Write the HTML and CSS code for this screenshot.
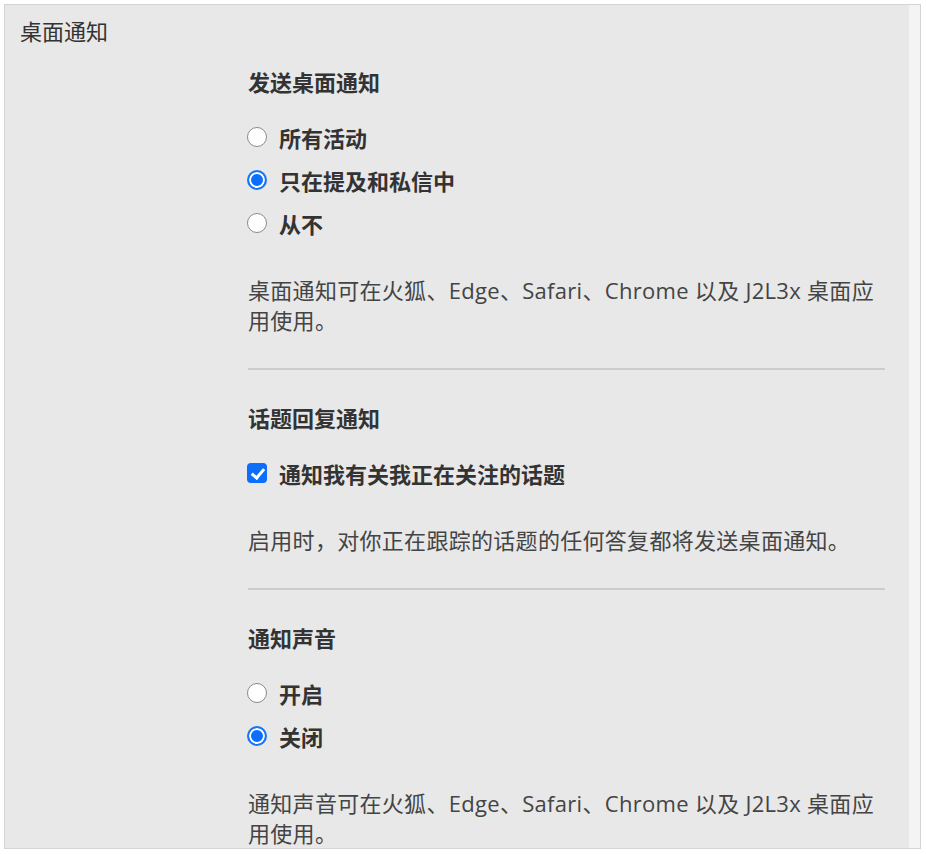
FILE: index.html
```html
<!DOCTYPE html>
<html lang="zh-CN">
<head>
    <meta charset="UTF-8">
    <meta name="viewport" content="width=device-width, initial-scale=1.0">
    <title>桌面通知</title>
    <link rel="stylesheet" href="styles.css">
</head>
<body>
    <div class="panel">
        <div class="panel-main">
            <h2 class="panel-title">桌面通知</h2>
            <div class="panel-body">
                <div class="section">
                    <h3 class="section-title">发送桌面通知</h3>
                    <div class="options">
                        <label class="option"><input type="radio" name="desktop"> 所有活动</label>
                        <label class="option"><input type="radio" name="desktop" checked> 只在提及和私信中</label>
                        <label class="option"><input type="radio" name="desktop"> 从不</label>
                    </div>
                    <p class="hint">桌面通知可在火狐、Edge、Safari、Chrome 以及 J2L3x 桌面应用使用。</p>
                </div>
                <div class="section">
                    <h3 class="section-title">话题回复通知</h3>
                    <div class="options">
                        <label class="option"><input type="checkbox" checked> 通知我有关我正在关注的话题</label>
                    </div>
                    <p class="hint">启用时，对你正在跟踪的话题的任何答复都将发送桌面通知。</p>
                </div>
                <div class="section">
                    <h3 class="section-title">通知声音</h3>
                    <div class="options">
                        <label class="option"><input type="radio" name="sound"> 开启</label>
                        <label class="option"><input type="radio" name="sound" checked> 关闭</label>
                    </div>
                    <p class="hint">通知声音可在火狐、Edge、Safari、Chrome 以及 J2L3x 桌面应用使用。</p>
                </div>
            </div>
        </div>
        <div class="scroll-track"></div>
    </div>
</body>
</html>
```

FILE: styles.css
```css
body {
    margin: 0;
    padding: 4px;
    background: #fff;
    font-family: "Open Sans", "Noto Sans CJK SC", sans-serif;
    color: #333;
}
.panel {
    display: flex;
    width: 915px;
    height: 843px;
    border: 1px solid #d4d4d4;
    background: #e8e8e8;
    overflow: hidden;
}
.panel-main {
    flex: 1;
    padding: 11px 24px 0 15px;
}
.scroll-track {
    width: 11px;
    background: #f4f4f4;
}
.panel-title {
    margin: 0;
    font-size: 22px;
    font-weight: 400;
    line-height: 30px;
}
.panel-body {
    margin-left: 228px;
    padding-top: 21px;
}
.section {
    border-bottom: 2px solid #cccccc;
    padding-bottom: 33px;
    margin-bottom: 33px;
}
.section:last-child {
    border-bottom: none;
}
.section-title {
    margin: 0;
    font-size: 22px;
    font-weight: 700;
    line-height: 30px;
}
.options {
    margin-top: 18px;
}
.option {
    display: flex;
    align-items: center;
    gap: 12px;
    height: 43px;
    font-size: 22px;
    font-weight: 700;
}
.option input {
    appearance: none;
    width: 20px;
    height: 20px;
    margin: 0 0 0 -1px;
    background: #fff;
    border: 1px solid #8a8a8a;
    border-radius: 50%;
}
.option input[type="radio"]:checked {
    border: 2px solid #1477f8;
    box-shadow: inset 0 0 0 2px #fff;
    background: #0b6efc;
}
.option input[type="checkbox"] {
    border-radius: 4px;
    border: none;
    background: #0b6efc;
    position: relative;
}
.option input[type="checkbox"]::after {
    content: "";
    position: absolute;
    left: 7px;
    top: 3px;
    width: 5px;
    height: 10px;
    border: solid #fff;
    border-width: 0 3px 3px 0;
    transform: rotate(40deg);
}
.hint {
    margin: 31px 0 0;
    padding-right: 8px;
    font-size: 22px;
    line-height: 30px;
    letter-spacing: 0.3px;
    color: #444;
}
```
